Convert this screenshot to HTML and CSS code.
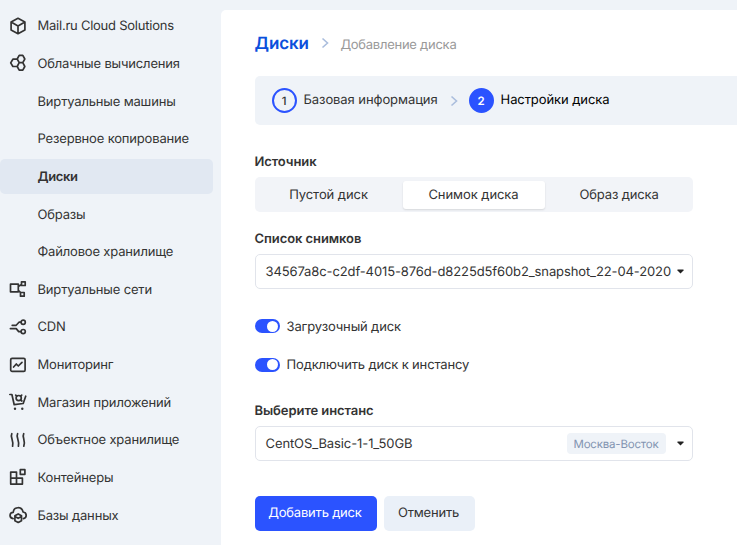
FILE: index.html
```html
<!DOCTYPE html>
<html lang="ru">
<head>
<meta charset="utf-8">
<title>Добавление диска</title>
<link rel="stylesheet" href="styles.css">
</head>
<body>
<div class="app">
  <nav class="sidebar">
    <a class="item"><svg class="icon" viewBox="0 0 18 18"><path d="M9 1.300 15.900 5v8L9 16.700 2.100 13V5zM2.500 5.300 9 8.900l6.500-3.600M9 8.900v7.400"/></svg><span class="t-mail">Mail.ru Cloud Solutions</span></a>
    <a class="item"><svg class="icon" viewBox="0 0 18 18"><path d="M10.200 1.300h3.600l2 3.700-2 3.600h-3.600L8.200 5zM10.200 8.600h3.600l2 3.900-2 3.700h-3.600l-2-3.700zM8.300 5.200H3.900L1.700 8.900l2.200 3.600h4.400M8.300 5.200l1.900 3.400"/></svg><span>Облачные вычисления</span></a>
    <a class="item"><span>Виртуальные машины</span></a>
    <a class="item"><span>Резервное копирование</span></a>
    <a class="item active"><span>Диски</span></a>
    <a class="item"><span>Образы</span></a>
    <a class="item"><span>Файловое хранилище</span></a>
    <a class="item"><svg class="icon" viewBox="0 0 18 18"><path d="M1.500 4.200h7.800v7.600H1.500zM12.500 1.800h3.700v3.700h-3.700zM11.500 12.500h3.700v3.700h-3.700zM9.300 6.500l3.200-2M9.300 10.300l2.400 2.300"/></svg><span>Виртуальные сети</span></a>
    <a class="item"><svg class="icon" viewBox="0 0 18 18"><circle cx="14.200" cy="4.200" r="2.100"/><circle cx="14.200" cy="13.600" r="2.100"/><path d="M12.100 4.200H10L7.200 7.300H3.200M1.400 10.600h5.800l2.500 3h2.400"/></svg><span>CDN</span></a>
    <a class="item"><svg class="icon" viewBox="0 0 18 18"><rect x="1.700" y="2.400" width="14.400" height="13" rx="1.400"/><path d="m4.600 11 2.700-3 2 2L13 6.300"/></svg><span>Мониторинг</span></a>
    <a class="item"><svg class="icon" viewBox="0 0 18 18"><path d="M.8 1.500h2.100l2.300 10.200 9-1.200 2.500-7.300"/><circle cx="9.700" cy="5.100" r="2.600"/><path d="m11.700 7 1.200 1M7.700 3.100l-1-1M11.700 3.100l1-1"/><circle class="dot" cx="6" cy="15.700" r="1.200"/><circle class="dot" cx="13.300" cy="15.700" r="1.200"/></svg><span>Магазин приложений</span></a>
    <a class="item"><svg class="icon" viewBox="0 0 18 18"><path d="M2.800 2.700c-2 3.200 2.300 7.200.8 12.500M8.600 2.700c-2 3.200 2.300 7.200.8 12.500M14.700 2.700c-2 3.200 2.300 7.200.1 12.500"/></svg><span>Объектное хранилище</span></a>
    <a class="item"><svg class="icon" viewBox="0 0 18 18"><path d="M1.700 4.100h5.800v12H1.700zM1.700 10.200h11.700v5.900H7.500M7.500 10.200v5.900M11.300 1.700h4.600v4.600h-4.600z"/></svg><span>Контейнеры</span></a>
    <a class="item"><svg class="icon" viewBox="0 0 18 18"><path d="M4.100 12.600C-.1 11.900.1 6.500 4.200 6.300 4.800.4 12.700.1 14.100 6c4.100.5 4 6 .3 6.600"/><path d="m9.200 7.900 3.300 1.800v5L9.200 16.500l-3.300-1.800v-5zM5.900 10.600l3.300 1.700 3.300-1.700"/></svg><span>Базы данных</span></a>
    <a class="item"><svg class="icon" viewBox="0 0 18 18"><path d="M9 1.800 15.500 5v8L9 16.400 2.500 13V5z"/></svg></a>
  </nav>
  <main class="panel">
    <header class="crumbs">
      <h1>Диски</h1>
      <svg class="chevron" viewBox="0 0 8 12"><path d="m1.500 1.500 5 4.500-5 4.500"/></svg>
      <span class="current">Добавление диска</span>
    </header>
    <div class="steps">
      <span class="num">1</span><span class="step-a">Базовая информация</span>
      <svg class="chevron" viewBox="0 0 8 12"><path d="m1.500 1.500 5 4.500-5 4.500"/></svg>
      <span class="num on">2</span><span class="step-b">Настройки диска</span>
    </div>
    <form class="form">
      <label class="title">Источник</label>
      <div class="segments">
        <span class="seg">Пустой диск</span><span class="seg chosen">Снимок диска</span><span class="seg last">Образ диска</span>
      </div>
      <label class="title second">Список снимков</label>
      <div class="select"><span class="value snap">34567a8c-c2df-4015-876d-d8225d5f60b2_snapshot_22-04-2020</span><svg class="caret" viewBox="0 0 7 5"><path d="M.5.500h6v1L3.500 4.500.5 1.500z"/></svg></div>
      <div class="switches">
        <div class="switch"><i class="track"></i><span>Загрузочный диск</span></div>
        <div class="switch"><i class="track"></i><span>Подключить диск к инстансу</span></div>
      </div>
      <label class="title third">Выберите инстанс</label>
      <div class="select"><span class="value">CentOS_Basic-1-1_50GB</span><span class="tag">Москва-Восток</span><svg class="caret" viewBox="0 0 7 5"><path d="M.5.500h6v1L3.500 4.500.5 1.500z"/></svg></div>
      <div class="actions"><span class="btn primary">Добавить диск</span><span class="btn">Отменить</span></div>
    </form>
  </main>
</div>
</body>
</html>
```
FILE: styles.css
```css
* { box-sizing: border-box; }
body {
  margin: 0;
  height: 545px;
  overflow: hidden;
  background: #eff3f8;
  color: #333;
  font: 13px/18px Inter, "Liberation Sans", sans-serif;
  text-rendering: geometricPrecision;
}
.app { display: flex; height: 545px; overflow: hidden; }
.sidebar {
  flex: none;
  display: flex;
  flex-direction: column;
  gap: 2.65px;
  width: 213px;
  margin-right: 7.5px;
  padding-top: 8.3px;
  letter-spacing: -0.17px;
}
.item {
  flex: none;
  display: flex;
  align-items: center;
  height: 35px;
  padding-left: 37.5px;
  white-space: nowrap;
}
.item span { padding-top: 1px; }
.t-mail { letter-spacing: -0.24px; }
.item.active { background: #e1e8f2; border-radius: 5px; font-weight: 600; letter-spacing: -0.35px; }
.icon {
  width: 18px;
  height: 18px;
  margin-left: -28.3px;
  margin-right: 10.3px;
  fill: none;
  stroke: #333;
  stroke-width: 1.7;
  stroke-linejoin: round;
  stroke-linecap: round;
}
.icon .dot { fill: #333; stroke: none; }
.panel {
  flex: 1;
  min-width: 0;
  margin-top: 10px;
  padding-left: 34px;
  background: #fff;
  border-top-left-radius: 5px;
}
.crumbs { display: flex; align-items: center; height: 66px; }
h1 { margin: 0; padding-top: 1px; font-size: 17px; line-height: 22px; font-weight: 600; letter-spacing: -0.1px; color: #0b50dc; }
.chevron { flex: none; width: 8px; height: 12px; fill: none; stroke: #aabddd; stroke-width: 1.6; }
.crumbs .chevron { margin: 0 12px; }
.current { color: #999; padding-top: 4px; margin-left: -0.5px; letter-spacing: -0.25px; }
.steps {
  display: flex;
  align-items: center;
  height: 49px;
  padding-left: 17px;
  background: #eff3f8;
  border-radius: 5px 0 0 5px;
  white-space: nowrap;
  letter-spacing: -0.08px;
}
.num {
  display: flex;
  align-items: center;
  justify-content: center;
  width: 25px;
  height: 25px;
  margin-right: 7px;
  border: 2px solid #2b53ff;
  border-radius: 50%;
  font-size: 11.5px;
  font-weight: 500;
}
.num.on { background: #2b53ff; color: #fff; font-weight: 600; }
.steps .chevron { margin: 0 11px 0 12px; }
.step-a, .step-b { padding-bottom: 1px; }
.step-b { color: #000; }
.form { width: 438px; padding-top: 27px; letter-spacing: -0.15px; }
.title { display: block; height: 18px; padding-top: 1px; font-weight: 600; letter-spacing: -0.08px; }
.segments {
  display: flex;
  height: 35px;
  margin-top: 7px;
  padding: 4px 0 3px;
  background: #f2f4f8;
  border-radius: 5px;
  letter-spacing: -0.07px;
}
.seg { width: 148px; display: flex; align-items: center; justify-content: center; padding-bottom: 1px; }
.seg.chosen { width: 142px; background: #fff; border-radius: 3px; box-shadow: 0 1px 2px #0000001f; }
.seg.last { padding-left: 1px; letter-spacing: -0.15px; }
.second { margin-top: 17px; }
.select {
  display: flex;
  align-items: center;
  height: 35px;
  margin-top: 7px;
  padding: 0 8px 0 10px;
  border: 1px solid #e1e4eb;
  border-radius: 5px;
}
.value { flex: 1; min-width: 0; padding-top: 1px; white-space: nowrap; letter-spacing: -0.1px; }
.snap { padding-top: 0; letter-spacing: -0.11px; }
.caret { flex: none; width: 7px; height: 5px; fill: #222; }
.tag {
  display: flex;
  align-items: center;
  justify-content: center;
  width: 99px;
  height: 21px;
  margin-right: 11px;
  padding-top: 1px;
  border-radius: 4px;
  background: #eff3f8;
  color: #8293b1;
  font-size: 11.5px;
  letter-spacing: -0.2px;
}
.switches { display: grid; gap: 20.5px; margin-top: 28px; }
.switch { display: flex; align-items: center; gap: 7px; height: 18px; }
.switch span { padding-top: 1px; }
.track {
  display: flex;
  justify-content: flex-end;
  align-items: center;
  width: 25px;
  height: 14px;
  padding-right: 1.5px;
  border-radius: 7px;
  background: #2b53ff;
}
.track::after { content: ""; width: 11px; height: 11px; border-radius: 50%; background: #fff; }
.third { margin-top: 27px; }
.actions { display: flex; gap: 7px; margin-top: 35px; letter-spacing: -0.2px; }
.btn {
  display: flex;
  align-items: center;
  justify-content: center;
  width: 91px;
  height: 35px;
  padding: 0 1px 0 0;
  border-radius: 5px;
  background: #eaf0f8;
}
.btn.primary { width: 122px; background: #2b53ff; color: #fff; }
```
